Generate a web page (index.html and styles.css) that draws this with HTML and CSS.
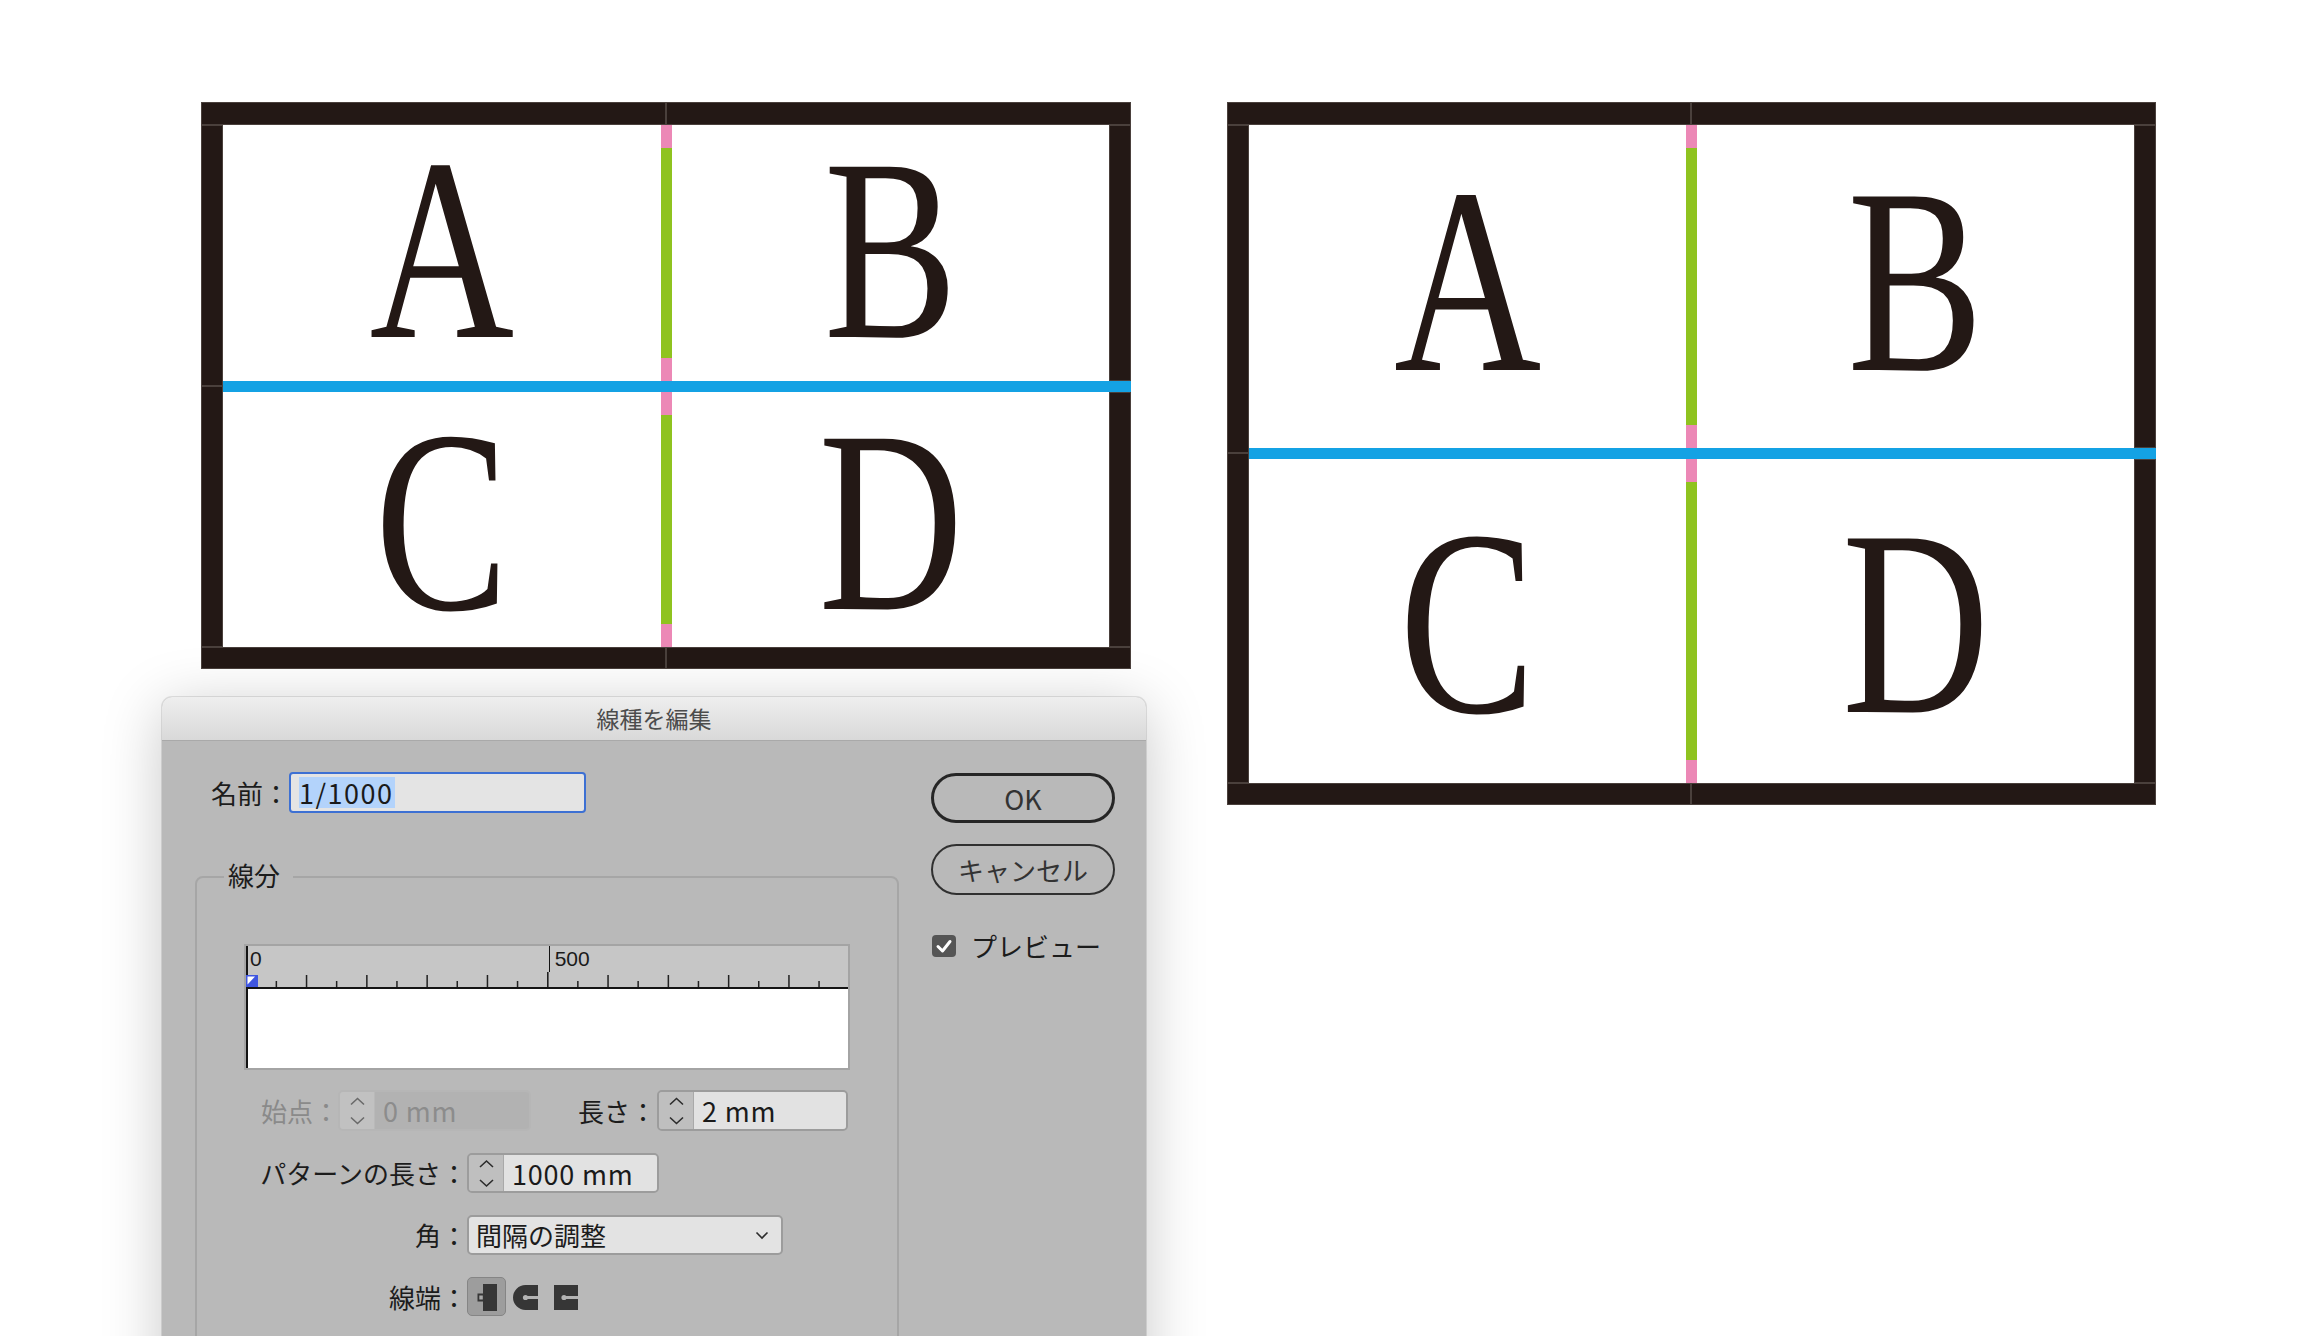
FILE: index.html
```html
<!DOCTYPE html>
<html lang="ja">
<head>
<meta charset="utf-8">
<title>線種を編集</title>
<link rel="stylesheet" href="styles.css">
</head>
<body>
<div class="page">
  <div class="left-col">
    <div class="board board-a">
      <div class="bar tl"></div><div class="bar tr"></div>
      <div class="bar bl"></div><div class="bar br"></div>
      <div class="bar lu"></div><div class="bar ll"></div>
      <div class="bar ru"></div><div class="bar rl"></div>
      <div class="hline"></div>
      <div class="vdash vd-top"><i class="pk"></i><i class="gr"></i><i class="pk"></i></div>
      <div class="vdash vd-bot"><i class="pk"></i><i class="gr"></i><i class="pk"></i></div>
      <div class="cell c-a"><span class="glyph up">A</span></div>
      <div class="cell c-b"><span class="glyph up">B</span></div>
      <div class="cell c-c"><span class="glyph down">C</span></div>
      <div class="cell c-d"><span class="glyph down">D</span></div>
    </div>

    <div class="dialog">
      <div class="titlebar">線種を編集</div>
      <div class="dlg-body">
        <div class="dlg-main">
          <div class="name-row">
            <span class="lbl">名前：</span>
            <div class="name-input"><span class="sel">1/1000</span></div>
          </div>

          <div class="segment">
            <div class="seg-title">線分</div>
            <div class="ruler">
              <div class="ruler-top">
                <div class="ruler-labels">
                  <span class="rn rn-0">0</span>
                  <span class="rn rn-500">500</span>
                </div>
                <svg class="ruler-ticks" width="602" height="17" viewBox="0 26 602 17">
                  <rect x="0" y="41" width="602" height="2" fill="#141414"/>
                  <g fill="#222">
                    <rect x="29.6" y="35" width="1.5" height="6"/>
                    <rect x="59.8" y="29" width="1.5" height="12"/>
                    <rect x="89.9" y="35" width="1.5" height="6"/>
                    <rect x="120.1" y="29" width="1.5" height="12"/>
                    <rect x="150.2" y="35" width="1.5" height="6"/>
                    <rect x="180.4" y="29" width="1.5" height="12"/>
                    <rect x="210.5" y="35" width="1.5" height="6"/>
                    <rect x="240.7" y="29" width="1.5" height="12"/>
                    <rect x="270.8" y="35" width="1.5" height="6"/>
                    <rect x="301" y="26" width="1.6" height="15"/>
                    <rect x="331.1" y="35" width="1.5" height="6"/>
                    <rect x="361.3" y="29" width="1.5" height="12"/>
                    <rect x="391.4" y="35" width="1.5" height="6"/>
                    <rect x="421.6" y="29" width="1.5" height="12"/>
                    <rect x="451.7" y="35" width="1.5" height="6"/>
                    <rect x="481.9" y="29" width="1.5" height="12"/>
                    <rect x="512" y="35" width="1.5" height="6"/>
                    <rect x="542.2" y="29" width="1.5" height="12"/>
                    <rect x="572.3" y="35" width="1.5" height="6"/>
                  </g>
                  <rect x="0" y="29" width="12" height="12" fill="#3f56e0"/>
                  <polygon points="1.5,30.5 9,30.5 1.5,38.5" fill="#ffffff"/>
                </svg>
              </div>
              <div class="ruler-white"></div>
            </div>

            <div class="row-first">
              <span class="lbl dim w3">始点：</span>
              <div class="stepper disabled s-start">
                <span class="arrows"><svg width="34" height="37" viewBox="0 0 34 37"><polyline points="11,12.5 17.5,6.5 24,12.5"/><polyline points="11,25.5 17.5,31.5 24,25.5"/></svg></span>
                <span class="val">0 mm</span>
              </div>
              <span class="lbl w3 len-lbl">長さ：</span>
              <div class="stepper s-len">
                <span class="arrows"><svg width="34" height="37" viewBox="0 0 34 37"><polyline points="11,12.5 17.5,6.5 24,12.5"/><polyline points="11,25.5 17.5,31.5 24,25.5"/></svg></span>
                <span class="val">2 mm</span>
              </div>
            </div>

            <div class="form-grid">
              <span class="lbl">パターンの長さ：</span>
              <div class="stepper s-pat">
                <span class="arrows"><svg width="34" height="36" viewBox="0 0 34 36"><polyline points="11,12 17.5,6 24,12"/><polyline points="11,25 17.5,31 24,25"/></svg></span>
                <span class="val">1000 mm</span>
              </div>

              <span class="lbl">角：</span>
              <div class="select">
                <span class="val">間隔の調整</span>
                <svg class="chev" width="14" height="9" viewBox="0 0 14 9"><polyline points="1.5,1.5 7,7 12.5,1.5"/></svg>
              </div>

              <span class="lbl">線端：</span>
              <div class="caps">
                <span class="cap selected">
                  <svg width="39" height="39" viewBox="0 0 39 39">
                    <rect x="16" y="7" width="14" height="27" fill="#363636"/>
                    <rect x="10.5" y="16.5" width="7" height="8" fill="#363636"/>
                    <rect x="12.3" y="18.5" width="3.5" height="4" fill="#a9a9a9"/>
                  </svg>
                </span>
                <span class="cap">
                  <svg width="39" height="39" viewBox="0 0 39 39">
                    <path d="M31,8 H18.5 A12.5,12.5 0 0 0 18.5,33 H31 Z" fill="#363636"/>
                    <rect x="18.5" y="19" width="12.5" height="3" fill="#b3b3b3"/>
                    <circle cx="18.5" cy="20.5" r="2.6" fill="#b3b3b3"/>
                  </svg>
                </span>
                <span class="cap">
                  <svg width="39" height="39" viewBox="0 0 39 39">
                    <rect x="7" y="8" width="24" height="25" fill="#363636"/>
                    <rect x="17" y="19" width="14" height="3" fill="#b3b3b3"/>
                    <circle cx="17" cy="20.5" r="2.6" fill="#b3b3b3"/>
                  </svg>
                </span>
              </div>
            </div>
          </div>
        </div>

        <div class="dlg-side">
          <div class="btn btn-ok">OK</div>
          <div class="btn btn-cancel">キャンセル</div>
          <div class="check">
            <span class="box"><svg width="24" height="22" viewBox="0 0 24 22"><polyline points="6,11.5 10.5,16 18,6.5"/></svg></span>
            <span class="check-lbl">プレビュー</span>
          </div>
        </div>
      </div>
    </div>
  </div>

  <div class="board board-b">
    <div class="bar tl"></div><div class="bar tr"></div>
    <div class="bar bl"></div><div class="bar br"></div>
    <div class="bar lu"></div><div class="bar ll"></div>
    <div class="bar ru"></div><div class="bar rl"></div>
    <div class="hline"></div>
    <div class="vdash vd-top"><i class="pk"></i><i class="gr"></i><i class="pk"></i></div>
    <div class="vdash vd-bot"><i class="pk"></i><i class="gr"></i><i class="pk"></i></div>
    <div class="cell c-a"><span class="glyph up">A</span></div>
    <div class="cell c-b"><span class="glyph up">B</span></div>
    <div class="cell c-c"><span class="glyph down">C</span></div>
    <div class="cell c-d"><span class="glyph down">D</span></div>
  </div>
</div>
</body>
</html>
```

FILE: styles.css
```css
html, body {
  margin: 0;
  height: 100%;
  overflow: hidden;
  background: #ffffff;
}

body {
  font-family: "Noto Sans CJK JP", "Noto Sans", sans-serif;
  text-spacing-trim: space-all;
  color: #1c1c1c;
}

.page {
  display: flex;
  align-items: flex-start;
  gap: 81px;
  padding: 102px 0 0 162px;
}

.left-col {
  width: 984px;
  display: flex;
  flex-direction: column;
  flex: none;
}

/* ---------- artboards ---------- */
.board {
  display: grid;
  flex: none;
  background: #ffffff;
}

.board-a {
  margin-left: 39px;
  grid-template-columns: 22px 438px 5px 6px 437px 22px;
  grid-template-rows: 23px 256px 5px 6px 255px 22px;
}

.board-b {
  grid-template-columns: 22px 437px 5px 6px 437px 22px;
  grid-template-rows: 23px 323px 5px 6px 324px 22px;
}

.bar {
  background: #231815;
  box-shadow: inset 0 0 0 1px rgba(150, 140, 136, 0.35);
}

.tl { grid-column: 1 / 4; grid-row: 1; }
.tr { grid-column: 4 / 7; grid-row: 1; }
.bl { grid-column: 1 / 4; grid-row: 6; }
.br { grid-column: 4 / 7; grid-row: 6; }
.lu { grid-column: 1; grid-row: 2 / 4; }
.ll { grid-column: 1; grid-row: 4 / 6; }
.ru { grid-column: 6; grid-row: 2; }
.rl { grid-column: 6; grid-row: 5; }

.hline {
  grid-column: 2 / 7;
  grid-row: 3 / 5;
  background: #14a2e4;
}

.vdash {
  grid-column: 3 / 5;
  display: flex;
  flex-direction: column;
}
.vd-top { grid-row: 2; }
.vd-bot { grid-row: 5; }
.vdash .pk { display: block; height: 23px; background: #ec88b6; flex: none; }
.vdash .gr { display: block; flex: 1; background: #8fc31f; }

.cell {
  display: flex;
  align-items: center;
  justify-content: center;
  min-width: 0;
  min-height: 0;
}
.c-a { grid-column: 2; grid-row: 2; }
.c-b { grid-column: 5; grid-row: 2; }
.c-c { grid-column: 2; grid-row: 5; }
.c-d { grid-column: 5; grid-row: 5; }

.glyph {
  font-family: "Liberation Serif", "DejaVu Serif", serif;
  color: #231815;
  line-height: 1.15;
  display: block;
}
.board-a .glyph { font-size: 260px; }
.board-b .glyph { font-size: 265px; }
.board-a .glyph.up { transform: translateY(-4px) scaleX(0.77); }
.board-a .glyph.down { transform: translateY(2px) scaleX(0.77); }
.board-b .glyph.up { transform: translateY(-5px) scaleX(0.77); }
.board-b .glyph.down { transform: translateY(2px) scaleX(0.77); }

/* ---------- dialog ---------- */
.dialog {
  margin-top: 28px;
  width: 984px;
  height: 700px;
  background: #b9b9b9;
  border-radius: 10px 10px 0 0;
  box-shadow: 0 10px 60px rgba(0, 0, 0, 0.22), 0 0 0 1px rgba(0, 0, 0, 0.1);
  overflow: hidden;
}

.titlebar {
  height: 43px;
  line-height: 43px;
  text-align: center;
  font-size: 23px;
  color: #4c4c4c;
  background: linear-gradient(#eeeeee, #d9d9d9);
  border-bottom: 1px solid #a9a9a9;
}

.dlg-body {
  display: grid;
  grid-template-columns: 704px 184px;
  column-gap: 32px;
  padding: 31px 31px 0 33px;
}

.lbl {
  font-size: 26px;
  line-height: 30px;
  white-space: nowrap;
  color: #1c1c1c;
}
.lbl.dim { color: #8a8a8a; }
.w3 { width: 78px; flex: none; }

.name-row {
  display: flex;
  align-items: center;
  height: 41px;
  padding-left: 16px;
}

.name-input {
  width: 297px;
  height: 41px;
  box-sizing: border-box;
  border: 2px solid #3d70d3;
  border-radius: 4px;
  background: #e4e4e4;
  display: flex;
  align-items: center;
  padding-left: 8px;
}
.name-input .sel {
  background: #b3d3fb;
  font-size: 27px;
  line-height: 31px;
  letter-spacing: 1.5px;
  color: #1a1a1a;
  padding-right: 1px;
}

.segment {
  margin-top: 63px;
  height: 600px;
  border: 2px solid #a6a6a6;
  border-radius: 8px;
}

.seg-title {
  width: fit-content;
  margin: -18px 0 0 27px;
  padding: 0 13px 2px 4px;
  font-size: 26px;
  line-height: 30px;
  background: #b9b9b9;
  color: #1c1c1c;
}

.ruler {
  margin: 52px 0 0 47px;
  width: 602px;
  border: 2px solid #a4a4a4;
  background: #ffffff;
}
.ruler-top {
  background: #c6c6c6;
  border-left: 2px solid #141414;
  height: 43px;
  display: flex;
  flex-direction: column;
  justify-content: space-between;
}
.ruler-labels {
  display: flex;
  height: 26px;
  align-items: flex-start;
}
.rn {
  font-family: "Liberation Sans", "Noto Sans", sans-serif;
  font-size: 21px;
  line-height: 24px;
  color: #1a1a1a;
  margin-top: 1px;
}
.rn-0 { margin-left: 2px; }
.rn-500 {
  margin-left: 287px;
  padding-left: 5px;
  border-left: 1.6px solid #141414;
  margin-top: 0;
  padding-top: 1px;
  height: 25px;
}
.ruler-ticks {
  display: block;
  margin-left: -2px;
}
.ruler-white {
  height: 79px;
  border-left: 2px solid #141414;
}

.row-first {
  margin-top: 20px;
  padding-left: 64px;
  display: flex;
  align-items: center;
  height: 41px;
}
.len-lbl { margin-left: 47px; }

.stepper {
  display: flex;
  box-sizing: border-box;
  border: 2px solid #9c9c9c;
  border-radius: 5px;
  overflow: hidden;
  flex: none;
  height: 41px;
}
.stepper .arrows {
  width: 34px;
  flex: none;
  background: #bfbfbf;
  border-right: 1px solid #a9a9a9;
  display: flex;
  align-items: center;
}
.stepper .arrows svg { display: block; }
.stepper .arrows polyline {
  fill: none;
  stroke: #2c2c2c;
  stroke-width: 1.6;
}
.stepper .val {
  flex: 1;
  background: #e2e2e2;
  font-size: 27px;
  line-height: 37px;
  padding-left: 8px;
  letter-spacing: 0.8px;
  color: #1a1a1a;
  white-space: nowrap;
}
.s-start { width: 193px; margin-left: -1px; }
.s-len { width: 191px; margin-left: 1px; }
.s-pat { width: 192px; height: 40px; }

.stepper.disabled { border-color: #b6b6b6; }
.stepper.disabled .arrows { background: #c1c1c1; border-right-color: #b9b9b9; }
.stepper.disabled .arrows polyline { stroke: #6a6a6a; }
.stepper.disabled .val { background: #b2b2b2; color: #8c8c8c; }

.form-grid {
  margin-top: 22px;
  display: grid;
  grid-template-columns: 270px auto;
  grid-auto-rows: 40px;
  row-gap: 22px;
  align-items: center;
  justify-items: start;
}
.form-grid .lbl { justify-self: end; }

.select {
  width: 316px;
  height: 40px;
  box-sizing: border-box;
  border: 2px solid #9c9c9c;
  border-radius: 5px;
  background: #e3e3e3;
  display: flex;
  align-items: center;
  justify-content: space-between;
  padding: 0 12px 0 7px;
}
.select .val {
  font-size: 26px;
  line-height: 30px;
  color: #1c1c1c;
}
.select .chev polyline {
  fill: none;
  stroke: #2c2c2c;
  stroke-width: 1.6;
}

.caps {
  display: flex;
  gap: 1px;
  height: 39px;
  margin-top: -1px;
}
.cap {
  width: 39px;
  height: 39px;
  box-sizing: border-box;
  border-radius: 5px;
  display: block;
}
.cap svg { display: block; margin: -1.5px; }
.cap.selected {
  background: #9d9d9d;
  border: 1.5px solid #858585;
}
.cap:not(.selected) svg { margin: 0; }

/* side column */
.dlg-side {
  display: flex;
  flex-direction: column;
  align-items: stretch;
}

.btn {
  box-sizing: border-box;
  width: 184px;
  display: flex;
  align-items: center;
  justify-content: center;
  color: #333333;
  border-radius: 26px;
}
.btn-ok {
  margin-top: 1px;
  height: 50px;
  border: 3px solid #262626;
  font-size: 27px;
}
.btn-cancel {
  margin-top: 21px;
  height: 51px;
  border: 2px solid #303030;
  font-size: 26px;
}

.check {
  margin-top: 36px;
  display: flex;
  align-items: center;
  height: 30px;
  padding-left: 1px;
}
.check .box {
  width: 24px;
  height: 22px;
  border-radius: 4px;
  background: #555555;
  flex: none;
}
.check .box svg { display: block; }
.check .box polyline {
  fill: none;
  stroke: #ffffff;
  stroke-width: 3;
  stroke-linecap: round;
  stroke-linejoin: round;
}
.check-lbl {
  margin-left: 15px;
  font-size: 26px;
  line-height: 30px;
  color: #1c1c1c;
}
```
